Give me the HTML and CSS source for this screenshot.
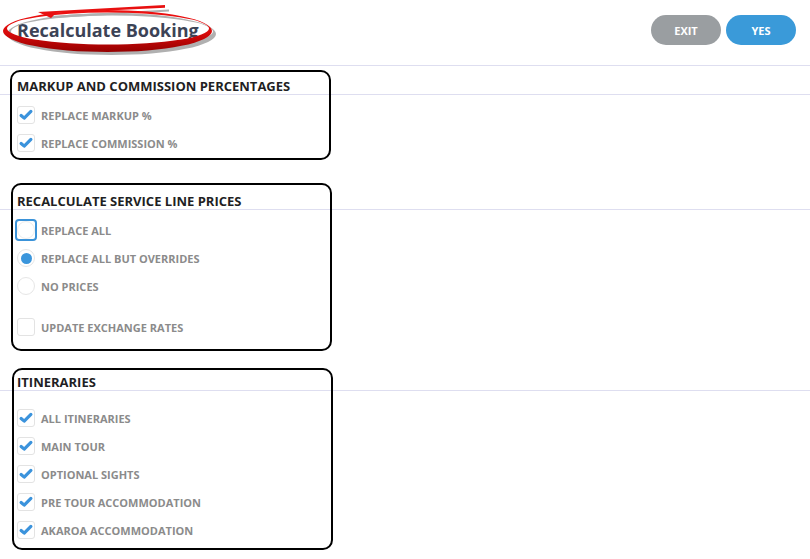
FILE: index.html
```html
<!DOCTYPE html>
<html>
<head>
<meta charset="utf-8">
<title>Recalculate Booking</title>
<link rel="stylesheet" href="styles.css">
</head>
<body>
<header class="topbar">
  <h1 class="title">Recalculate Booking</h1>
  <div class="actions">
    <button class="btn btn-exit">EXIT</button>
    <button class="btn btn-yes">YES</button>
  </div>
</header>

<section class="sec sec-1">
  <h2 class="sec-head">MARKUP AND COMMISSION PERCENTAGES</h2>
  <div class="rows rows-1">
    <label class="row"><span class="cb on"><svg viewBox="0 0 18 18"><path d="M3.5 9.5 L7 12.5 L14.5 5" /></svg></span><span class="lbl">REPLACE MARKUP %</span></label>
    <label class="row"><span class="cb on"><svg viewBox="0 0 18 18"><path d="M3.5 9.5 L7 12.5 L14.5 5" /></svg></span><span class="lbl">REPLACE COMMISSION %</span></label>
  </div>
</section>

<section class="sec sec-2">
  <h2 class="sec-head">RECALCULATE SERVICE LINE PRICES</h2>
  <div class="rows rows-2">
    <label class="row"><span class="focus"><span class="rd"></span></span><span class="lbl">REPLACE ALL</span></label>
    <label class="row"><span class="rd sel"><span class="dot"></span></span><span class="lbl">REPLACE ALL BUT OVERRIDES</span></label>
    <label class="row"><span class="rd"></span><span class="lbl">NO PRICES</span></label>
    <label class="row row-gap"><span class="cb"></span><span class="lbl">UPDATE EXCHANGE RATES</span></label>
  </div>
</section>

<section class="sec sec-3">
  <h2 class="sec-head">ITINERARIES</h2>
  <div class="rows rows-3">
    <label class="row"><span class="cb on"><svg viewBox="0 0 18 18"><path d="M3.5 9.5 L7 12.5 L14.5 5" /></svg></span><span class="lbl">ALL ITINERARIES</span></label>
    <label class="row"><span class="cb on"><svg viewBox="0 0 18 18"><path d="M3.5 9.5 L7 12.5 L14.5 5" /></svg></span><span class="lbl">MAIN TOUR</span></label>
    <label class="row"><span class="cb on"><svg viewBox="0 0 18 18"><path d="M3.5 9.5 L7 12.5 L14.5 5" /></svg></span><span class="lbl">OPTIONAL SIGHTS</span></label>
    <label class="row"><span class="cb on"><svg viewBox="0 0 18 18"><path d="M3.5 9.5 L7 12.5 L14.5 5" /></svg></span><span class="lbl">PRE TOUR ACCOMMODATION</span></label>
    <label class="row"><span class="cb on"><svg viewBox="0 0 18 18"><path d="M3.5 9.5 L7 12.5 L14.5 5" /></svg></span><span class="lbl">AKAROA ACCOMMODATION</span></label>
  </div>
</section>

<!-- annotation overlays -->
<svg class="anno-ellipse" viewBox="0 0 230 60" width="230" height="60">
  <defs>
    <linearGradient id="rg" x1="0" y1="0" x2="0" y2="1">
      <stop offset="0" stop-color="#f01010"/>
      <stop offset="0.55" stop-color="#d80a0a"/>
      <stop offset="1" stop-color="#950000"/>
    </linearGradient>
  </defs>
  <g transform="translate(4,3)" fill="#b0b0b0">
    <path fill-rule="evenodd" d="M3 31 A104.5 21 0 1 0 212 31 A104.5 21 0 1 0 3 31 Z M7 28.5 A101 16 0 1 0 209 28.5 A101 16 0 1 0 7 28.5 Z"/>
    <path d="M45 13 L165 6.5 L165 8.5 L50 15 Z"/>
  </g>
  <path fill="url(#rg)" fill-rule="evenodd" d="M3 31 A104.5 21 0 1 0 212 31 A104.5 21 0 1 0 3 31 Z M7 28.5 A101 16 0 1 0 209 28.5 A101 16 0 1 0 7 28.5 Z"/>
  <path fill="#e81010" d="M38 12 L165 5 L165 7.8 L56 13 L51 18 Z"/>
</svg>
<div class="anno-box box-1"></div>
<div class="anno-box box-2"></div>
<div class="anno-box box-3"></div>
</body>
</html>
```

FILE: styles.css
```css
html, body {
  margin: 0;
  padding: 0;
  background: #ffffff;
  font-family: "Open Sans", "Liberation Sans", Arial, sans-serif;
}
body {
  position: relative;
  width: 810px;
  height: 559px;
  overflow: hidden;
}
.topbar {
  box-sizing: border-box;
  border-bottom: 1px solid #dedef0;
  display: flex;
  align-items: flex-start;
  justify-content: space-between;
  padding: 0 14px 0 17px;
  height: 66px;
}
.title {
  margin: 17px 0 0 0;
  font-size: 18px;
  line-height: 26px;
  font-weight: 700;
  color: #3c4356;
  letter-spacing: 0;
}
.actions {
  display: flex;
  gap: 5px;
  margin-top: 15px;
}
.btn {
  width: 70px;
  height: 30px;
  border: none;
  border-radius: 15px;
  color: #ffffff;
  font-family: "Open Sans", "Liberation Sans", Arial, sans-serif;
  font-weight: 700;
  font-size: 11px;
  padding: 0;
  cursor: pointer;
}
.btn-exit { background: #9a9ea1; }
.btn-yes { background: #3a9ad9; }

.sec-head {
  margin: 0;
  font-size: 13px;
  line-height: 16px;
  font-weight: 700;
  color: #1f1f24;
  padding-left: 17px;
  border-bottom: 1px solid #dedef0;
}
.sec-1 .sec-head { padding-top: 12px; }
.sec-2 .sec-head { padding-top: 36px; }
.sec-3 .sec-head { padding-top: 33px; }

.rows {
  display: flex;
  flex-direction: column;
  padding-left: 17px;
}
.rows-1 { margin-top: 6px; }
.rows-2 { margin-top: 6px; }
.rows-3 { margin-top: 13px; }

.row {
  height: 28px;
  display: flex;
  align-items: center;
  gap: 6px;
}
.row-gap { margin-top: 13px; }

.lbl {
  font-size: 11px;
  font-weight: 700;
  color: #8b8b8b;
  letter-spacing: 0;
}
.cb {
  width: 18px;
  height: 18px;
  box-sizing: border-box;
  border: 1px solid #e3e3e3;
  border-radius: 3px;
  background: #fff;
  display: flex;
  align-items: center;
  justify-content: center;
  flex: none;
}
.cb svg {
  width: 18px;
  height: 18px;
}
.cb svg path {
  fill: none;
  stroke: #3b93dc;
  stroke-width: 3.6;
  stroke-linecap: round;
  stroke-linejoin: round;
}
.rd {
  width: 18px;
  height: 18px;
  box-sizing: border-box;
  border: 1px solid #e6e6e6;
  border-radius: 50%;
  background: #fff;
  display: flex;
  align-items: center;
  justify-content: center;
  flex: none;
}
.rd .dot {
  width: 11px;
  height: 11px;
  border-radius: 50%;
  background: #3b96dc;
}
.focus {
  width: 22px;
  height: 22px;
  box-sizing: border-box;
  border: 2px solid #3b93d9;
  border-radius: 4px;
  margin-left: -2px;
  margin-right: -2px;
  display: flex;
  align-items: center;
  justify-content: center;
  flex: none;
}
.focus .rd {
  border-color: #ededed;
}

.anno-ellipse {
  position: absolute;
  left: 0;
  top: 0;
  pointer-events: none;
}
.anno-box {
  position: absolute;
  border: 2px solid #000;
  border-radius: 10px;
  box-sizing: border-box;
  pointer-events: none;
}
.box-1 { left: 10px; top: 70px; width: 321px; height: 90px; }
.box-2 { left: 11px; top: 183px; width: 321px; height: 168px; }
.box-3 { left: 12px; top: 368px; width: 321px; height: 182px; }
```
